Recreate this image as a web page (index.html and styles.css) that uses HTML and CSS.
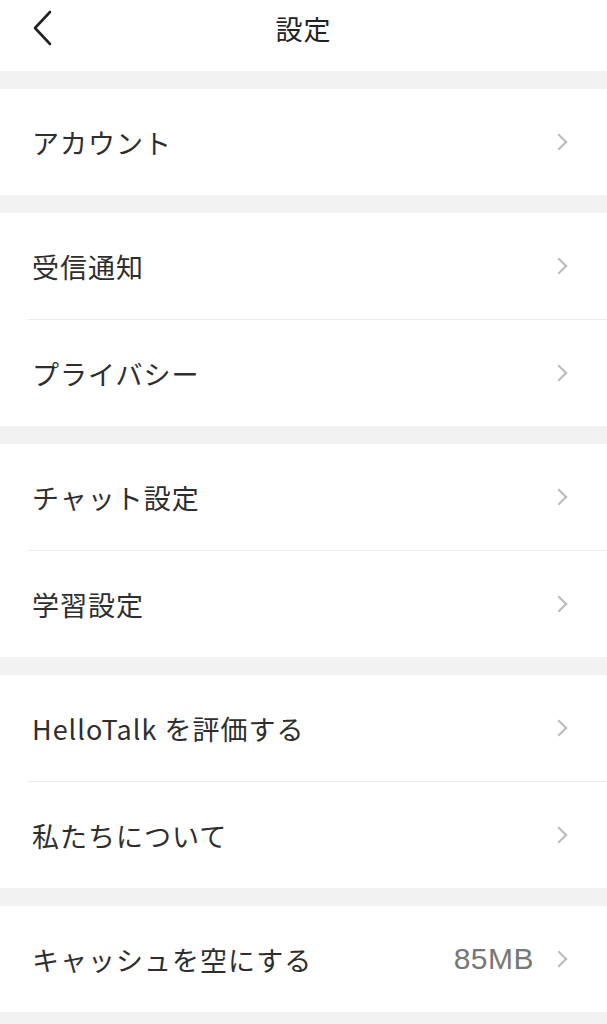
FILE: index.html
```html
<!DOCTYPE html>
<html lang="ja">
<head>
  <meta charset="UTF-8">
  <meta name="viewport" content="width=device-width, initial-scale=1.0">
  <title>設定</title>
  <link rel="stylesheet" href="styles.css">
</head>
<body>

  <!-- Top bar -->
  <header class="topbar">
    <button class="back" aria-label="戻る">
      <svg width="20" height="36" viewBox="0 0 20 36">
        <polyline points="17,2 2,18 17,34" fill="none" stroke="#222" stroke-width="2.6" stroke-linecap="round" stroke-linejoin="round"/>
      </svg>
    </button>
    <h1>設定</h1>
  </header>

  <section class="group">
    <div class="row"><span class="label">アカウント</span><span class="chev"></span></div>
  </section>

  <section class="group">
    <div class="row"><span class="label">受信通知</span><span class="chev"></span></div>
    <div class="row"><span class="label">プライバシー</span><span class="chev"></span></div>
  </section>

  <section class="group">
    <div class="row"><span class="label">チャット設定</span><span class="chev"></span></div>
    <div class="row"><span class="label">学習設定</span><span class="chev"></span></div>
  </section>

  <section class="group">
    <div class="row"><span class="label">HelloTalk を評価する</span><span class="chev"></span></div>
    <div class="row"><span class="label">私たちについて</span><span class="chev"></span></div>
  </section>

  <section class="group">
    <div class="row"><span class="label">キャッシュを空にする</span><span class="value">85MB</span><span class="chev"></span></div>
  </section>

</body>
</html>
```

FILE: styles.css
```css
/* Page */
body {
  margin: 0;
  background-color: #f2f2f2;
  font-family: "Noto Sans CJK JP", "Noto Sans", sans-serif;
  color: #2e2e2e;
}

/* Top bar */
.topbar {
  height: 56px;
  padding-bottom: 15px;
  background-color: #fff;
  display: flex;
  align-items: center;
  justify-content: center;
  position: relative;
}

.topbar h1 {
  margin: 0;
  font-size: 27px;
  font-weight: 400;
  letter-spacing: 1px;
  color: #222;
}

.back {
  position: absolute;
  left: 33px;
  top: 10px;
  padding: 0;
  border: none;
  background: none;
}

.back svg {
  display: block;
}

/* Groups */
.group {
  background-color: #fff;
  margin-top: 18px;
}

.row {
  height: 106px;
  margin-left: 28px;
  padding: 0 39px 0 4px;
  display: flex;
  align-items: center;
}

.row + .row {
  border-top: 1px solid #ececec;
}

.label {
  flex: 1;
  font-size: 27px;
  letter-spacing: 1px;
}

.value {
  font-size: 30px;
  color: #777;
  font-family: "Liberation Sans", Arial, sans-serif;
  letter-spacing: 0.5px;
  margin-right: 19px;
}

/* Chevron */
.chev {
  width: 10px;
  height: 10px;
  border-top: 2px solid #bbb;
  border-right: 2px solid #bbb;
  transform: rotate(45deg);
  margin-right: 3px;
}
```
